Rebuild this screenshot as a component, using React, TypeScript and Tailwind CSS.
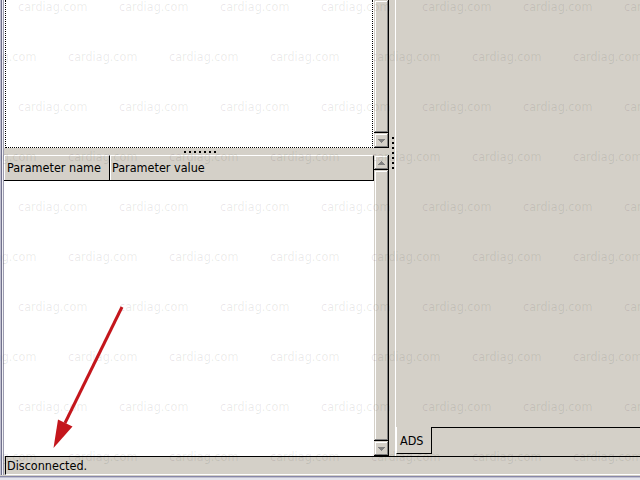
import React from "react";

const UI = "font-['DejaVu_Sans_Condensed','Liberation_Sans',sans-serif] text-[12.5px] leading-none text-black";
const RAISED =
  "bg-[#d4d0c8] shadow-[inset_-1px_-1px_0_#000000,inset_1px_1px_0_#d4d0c8,inset_-2px_-2px_0_#808080,inset_2px_2px_0_#ffffff]";

function Arrow({ dir }: { dir: "up" | "down" }) {
  const rows = dir === "down" ? [7, 5, 3, 1] : [1, 3, 5, 7];
  return (
    <svg width="7" height="4" viewBox="0 0 7 4" className="block" shapeRendering="crispEdges">
      {rows.map((w, i) => (
        <rect key={i} x={(7 - w) / 2} y={i} width={w} height={1} fill="#808080" />
      ))}
    </svg>
  );
}

function ScrollButton({ dir }: { dir: "up" | "down" }) {
  return (
    <div className={`h-[15px] w-[15px] flex items-center justify-center ${RAISED}`}>
      <Arrow dir={dir} />
    </div>
  );
}

function ScrollBar({ withUp }: { withUp: boolean }) {
  return (
    <div className="w-[15px] flex flex-col">
      {withUp && <ScrollButton dir="up" />}
      <div className={`flex-1 ${RAISED}`} />
      <ScrollButton dir="down" />
    </div>
  );
}

function Watermark() {
  const rows = Array.from({ length: 10 }, (_, i) => i);
  const cols = Array.from({ length: 8 }, (_, i) => i);
  return (
    <div className="absolute inset-0 pointer-events-none overflow-hidden">
      {rows.map((r) => (
        <div
          key={r}
          className={`h-[50px] flex whitespace-nowrap ${r % 2 === 0 ? "ml-[18px]" : "-ml-[33px]"}`}
        >
          {cols.map((c) => (
            <span
              key={c}
              className="w-[101px] shrink-0 font-['DejaVu_Sans_Condensed','Liberation_Sans',sans-serif] text-[12.5px] leading-[13px] text-[rgba(0,0,0,0.09)]"
            >
              cardiag.com
            </span>
          ))}
        </div>
      ))}
    </div>
  );
}

function RedArrow() {
  return (
    <svg className="absolute inset-0 pointer-events-none" width="640" height="480" viewBox="0 0 640 480">
      <line x1="122" y1="307" x2="65" y2="423" stroke="#c4161c" strokeWidth="3" />
      <polygon points="58,419.5 72.5,426.5 53.5,448" fill="#c4161c" />
    </svg>
  );
}

export default function App() {
  return (
    <div className={`relative w-[640px] h-[480px] overflow-hidden bg-[#d4d0c8] flex flex-col ${UI}`}>
      <div className="h-[475px] flex">
        {/* left window frame */}
        <div className="w-[4px] flex">
          <div className="w-[1px] bg-[#c0c0d0]" />
          <div className="w-[1px] bg-[#70708c]" />
          <div className="w-[1px] bg-[#f0f0f4]" />
          <div className="w-[1px] bg-[#9c9cb0]" />
        </div>
        <div className="flex-1 flex flex-col">
          {/* main row */}
          <div className="h-[456px] flex">
            {/* left pane */}
            <div className="w-[385px] flex flex-col">
              {/* upper list */}
              <div className="h-[148px] flex">
                <div className="flex-1 bg-white px-[1px]">
                  <div className="h-full border-l border-r border-b border-dotted border-black" />
                </div>
                <ScrollBar withUp={false} />
              </div>
              {/* horizontal splitter */}
              <div className="h-[7px] flex items-center pl-[180px] gap-[3px]">
                {Array.from({ length: 7 }, (_, i) => (
                  <div key={i} className="w-[2px] h-[2px] bg-black" />
                ))}
              </div>
              {/* lower list */}
              <div className="h-[301px] flex">
                <div className="flex-1 flex flex-col">
                  <div className="h-[26px] flex border-b border-black">
                    <div className="w-[106px] flex items-center pl-[2px] pt-[1px] border-t border-l border-t-white border-l-white border-r border-r-black">
                      Parameter name
                    </div>
                    <div className="flex-1 flex items-center pl-[1px] pt-[1px] border-t border-l border-t-white border-l-white border-r border-r-black">
                      Parameter value
                    </div>
                  </div>
                  <div className="flex-1 bg-white" />
                </div>
                <ScrollBar withUp={true} />
              </div>
            </div>
            {/* vertical splitter */}
            <div className="w-[6px] flex flex-col pt-[137px] pl-[3px] gap-[3px]">
              {Array.from({ length: 7 }, (_, i) => (
                <div key={i} className="w-[2px] h-[2px] bg-black" />
              ))}
            </div>
            {/* right panel */}
            <div className="flex-1 flex flex-col border-l border-white">
              <div className="flex-1" />
              <div className="h-[29px] flex">
                <div className="w-[36px] h-[27px] flex items-center pl-[3px] pt-[2px] border-l border-l-white border-r border-r-black border-b border-b-black">
                  ADS
                </div>
                <div className="flex-1 border-t border-black" />
              </div>
            </div>
          </div>
          {/* status bar */}
          <div className="h-[19px] ml-[1px] flex items-center pl-[1px] pt-[2px] border-t border-l border-t-black border-l-black border-b border-b-white">
            Disconnected.
          </div>
        </div>
      </div>
      {/* bottom window frame */}
      <div className="h-[5px] flex flex-col">
        <div className="h-[1px] bg-[#d4d0c8]" />
        <div className="h-[1px] bg-[#8888a8]" />
        <div className="h-[1px] bg-[#c0c0d0]" />
        <div className="flex-1 bg-[#e4e4ec]" />
      </div>
      <Watermark />
      <RedArrow />
    </div>
  );
}
